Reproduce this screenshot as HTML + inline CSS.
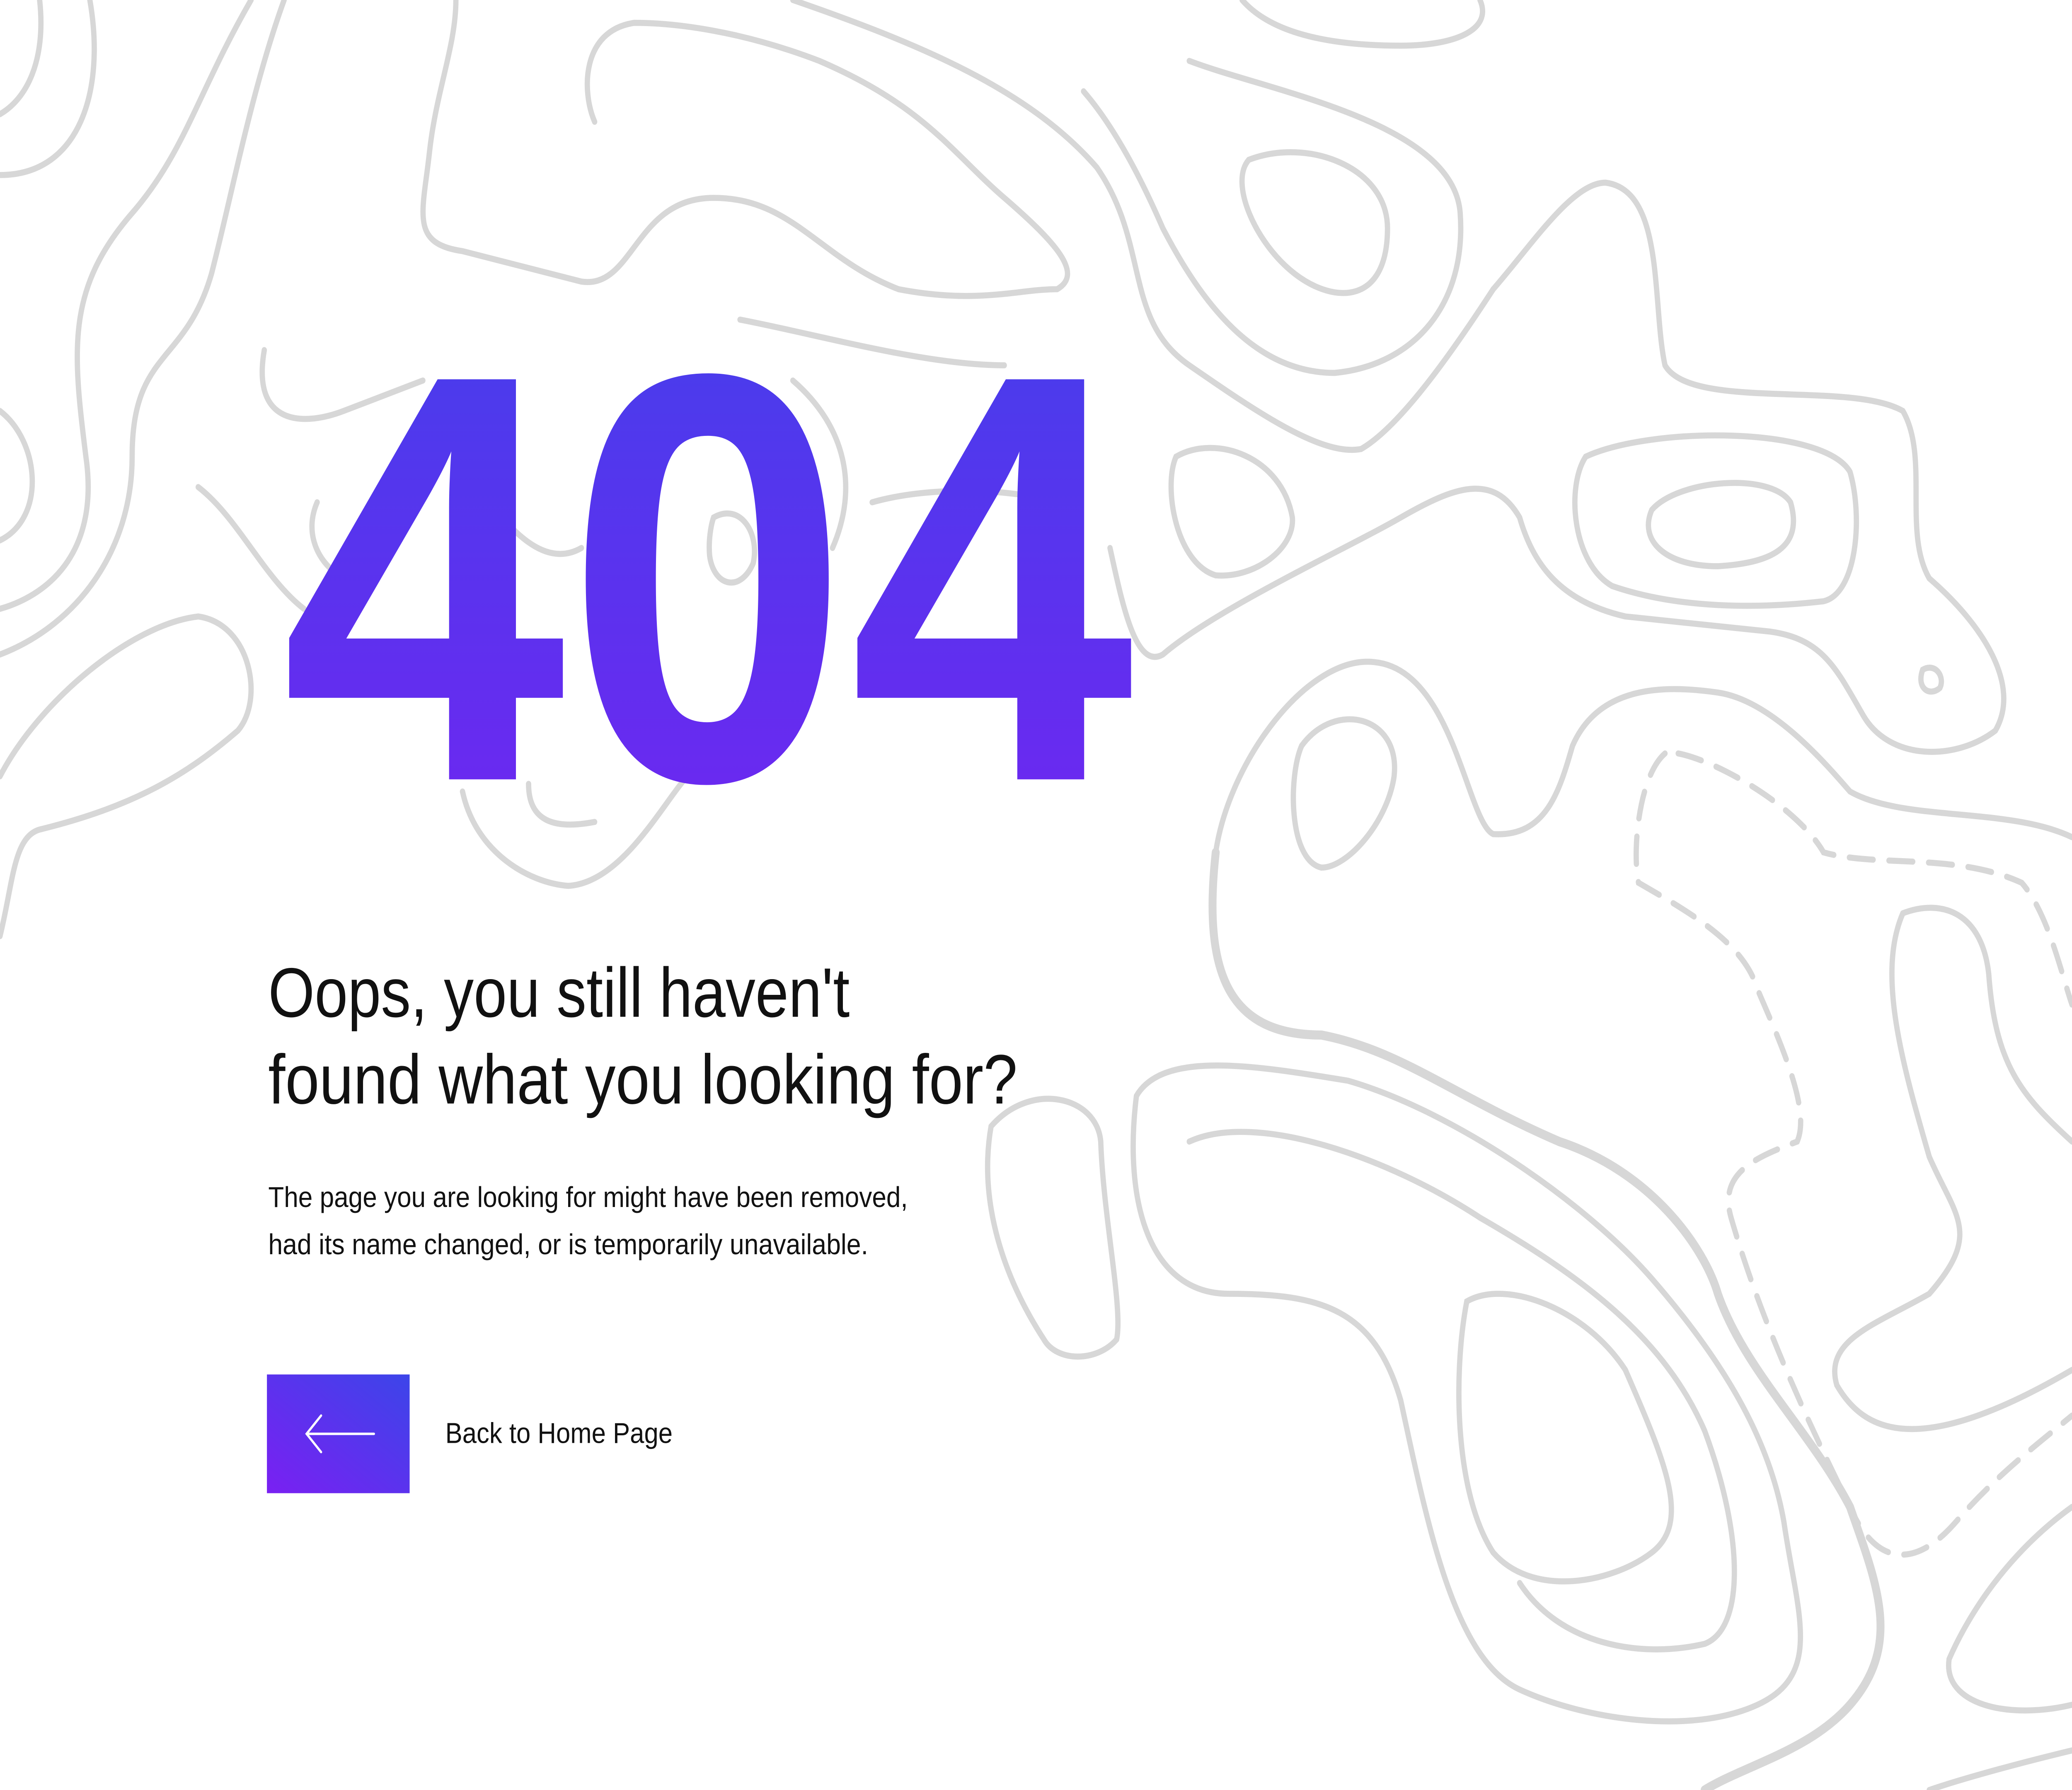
<!DOCTYPE html>
<html><head><meta charset="utf-8"><style>
html,body{margin:0;padding:0;background:#fff;overflow:hidden;width:100%;height:100%}
svg{display:block;width:100vw;height:100vh}
</style></head><body>
<svg viewBox="0 0 1568 1176" preserveAspectRatio="none" xmlns="http://www.w3.org/2000/svg">
<defs>
<linearGradient id="g" x1="0" y1="0" x2="0" y2="1">
<stop offset="0" stop-color="#4340eb"/><stop offset="1" stop-color="#7225f1"/>
</linearGradient>
<linearGradient id="b" x1="1" y1="0" x2="0" y2="1">
<stop offset="0" stop-color="#3c45e9"/><stop offset="1" stop-color="#7a20f2"/>
</linearGradient>
</defs>
<rect width="1568" height="1176" fill="#fff"/>
<g fill="none" stroke="#d7d7d7" stroke-width="4" stroke-linecap="round">
<path d="M30,0 C35,40 20,65 0,75"/>
<path d="M68,0 C80,60 60,115 0,115"/>
<path d="M190,0 C150,60 140,100 100,140 C50,190 55,230 65,300 C75,360 40,390 0,400"/>
<path d="M215,0 C190,60 175,130 160,180 C140,240 100,230 100,300 C100,360 60,410 0,430"/>
<path d="M0,270 C30,290 35,340 0,355"/>
<path d="M0,510 C30,460 100,410 150,405 C190,410 200,460 180,480 C140,510 100,530 30,545 C10,550 10,580 0,615"/>
<path d="M345,0 C345,30 330,60 325,100 C320,140 310,160 350,165 L440,185 C480,190 480,130 540,130 C600,130 620,170 680,190 C740,200 770,190 800,190 C820,180 800,160 760,130 C720,100 700,70 620,40 C560,20 510,15 480,15 C440,20 440,60 450,80"/>
<path d="M600,0 C700,30 780,60 830,110 C870,160 850,210 900,240 C950,270 1000,300 1030,295 C1060,280 1100,230 1130,190"/>
<path d="M945,105 C990,90 1050,110 1050,150 C1050,200 1010,200 980,180 C950,160 930,120 945,105 Z"/>
<path d="M900,40 C960,60 1100,80 1105,140 C1110,200 1070,240 1010,245 C950,245 910,200 880,150 C860,110 840,80 820,60"/>
<path d="M1120,0 C1130,20 1100,30 1060,30 C1000,30 960,20 940,0"/>
<path d="M1250,335 C1270,315 1340,310 1355,330 C1365,360 1340,370 1300,372 C1260,372 1240,355 1250,335 Z"/>
<path d="M1200,300 C1250,280 1380,280 1400,310 C1410,340 1405,390 1380,395 C1330,400 1270,400 1220,385 C1190,370 1185,320 1200,300 Z"/>
<path d="M890,300 C920,285 970,300 978,340 C980,360 950,380 920,378 C890,370 880,320 890,300 Z"/>
<path d="M1130,190 C1160,160 1190,120 1215,120 C1260,125 1250,200 1260,240 C1280,270 1400,250 1440,270 C1460,300 1440,350 1460,380 C1500,410 1530,450 1510,480 C1480,500 1430,500 1410,470 C1390,440 1380,420 1340,415 L1230,405 C1180,395 1160,370 1150,340 C1130,310 1100,320 1060,340 C1020,360 920,400 880,430 C860,440 850,400 840,360"/>
<path d="M1455,440 C1465,435 1472,445 1468,452 C1460,458 1450,452 1455,440 Z"/>
<path d="M920,560 C930,500 990,430 1040,435 C1100,440 1110,540 1130,548 C1170,550 1180,520 1190,490 C1210,450 1260,450 1300,455 C1340,460 1380,500 1400,520 C1440,540 1520,530 1568,550"/>
<path d="M985,490 C1010,460 1060,470 1055,510 C1050,540 1020,570 1000,570 C975,565 975,510 985,490 Z"/>
<path d="M920,560 C910,640 930,680 1000,680 C1060,690 1100,720 1180,750 C1250,770 1290,820 1300,850 C1320,900 1370,940 1400,990 C1420,1040 1440,1080 1400,1120 C1370,1150 1320,1160 1290,1176" stroke-width="6"/>
<path d="M860,720 C880,690 950,700 1020,710 C1100,730 1200,790 1250,840 C1310,900 1340,950 1350,1000 C1360,1060 1380,1100 1330,1120 C1280,1140 1200,1130 1150,1110 C1100,1090 1080,1000 1060,920 C1040,860 1000,850 930,850 C870,850 850,790 860,720 Z"/>
<path d="M900,750 C950,730 1050,760 1120,800 C1200,840 1260,880 1290,940 C1320,1010 1320,1070 1290,1080 C1240,1090 1180,1080 1150,1040"/>
<path d="M1110,855 C1140,840 1200,860 1230,900 C1260,960 1280,1000 1250,1020 C1220,1040 1160,1050 1130,1020 C1100,980 1100,900 1110,855 Z"/>
<path d="M750,740 C780,710 830,720 833,750 C835,800 850,860 845,880 C830,895 800,895 790,880 C760,840 740,790 750,740 Z"/>
<path d="M1440,600 C1470,590 1500,600 1505,640 C1510,700 1530,720 1568,750"/>
<path d="M1440,600 C1420,640 1440,700 1460,760 C1480,800 1500,810 1460,850 C1420,870 1380,880 1390,910 C1410,940 1450,960 1568,900"/>
<path d="M1568,990 C1520,1020 1490,1060 1475,1090 C1470,1120 1520,1130 1568,1120"/>
<path d="M1568,1150 C1520,1160 1480,1170 1460,1176"/>
<path d="M1260,495 C1240,510 1235,560 1240,580 C1280,600 1320,620 1330,650 C1350,690 1370,730 1360,750 C1330,760 1300,770 1310,800 C1330,860 1360,920 1400,990 C1420,1030 1450,1030 1480,1000 C1510,970 1540,950 1568,930" stroke-dasharray="18 12"/>
<path d="M1270,495 C1300,500 1360,530 1380,560 C1420,570 1480,560 1530,580 C1550,600 1560,640 1568,660" stroke-dasharray="18 12"/>
<path d="M200,230 C190,280 230,280 260,270 L320,250"/>
<path d="M150,320 C180,340 200,380 230,400"/>
<path d="M240,330 C230,350 240,370 260,380"/>
<path d="M560,210 C620,220 700,240 760,240"/>
<path d="M600,250 C640,280 650,320 630,360"/>
<path d="M540,340 C560,330 575,350 570,370 C560,390 540,385 537,365 C536,355 538,345 540,340 Z"/>
<path d="M350,520 C360,560 400,580 430,582 C470,580 500,530 520,510"/>
<path d="M400,515 C400,540 420,545 450,540"/>
<path d="M660,330 C700,320 760,320 800,330"/>
<path d="M380,340 C400,360 420,370 440,360"/>
</g>
<text x="213" y="512" font-family="Liberation Sans, sans-serif" font-weight="bold" font-size="382" fill="url(#g)" textLength="645" lengthAdjust="spacingAndGlyphs">404</text>
<g font-family="Liberation Sans, sans-serif" fill="#111">
<text x="203" y="668" font-size="46" textLength="440" lengthAdjust="spacingAndGlyphs">Oops, you still haven't</text>
<text x="203" y="725" font-size="46" textLength="567" lengthAdjust="spacingAndGlyphs">found what you looking for?</text>
<text x="203" y="793" font-size="19" textLength="484" lengthAdjust="spacingAndGlyphs">The page you are looking for might have been removed,</text>
<text x="203" y="824" font-size="19" textLength="454" lengthAdjust="spacingAndGlyphs">had its name changed, or is temporarily unavailable.</text>
<text x="337" y="948" font-size="19" textLength="172" lengthAdjust="spacingAndGlyphs">Back to Home Page</text>
</g>
<rect x="202" y="903" width="108" height="78" fill="url(#b)"/>
<g stroke="#fff" stroke-width="1.6" fill="none" stroke-linecap="round">
<path d="M233,942 L283,942"/>
<path d="M243,930 L232,942 L243,954"/>
</g>
</svg>
</body></html>
